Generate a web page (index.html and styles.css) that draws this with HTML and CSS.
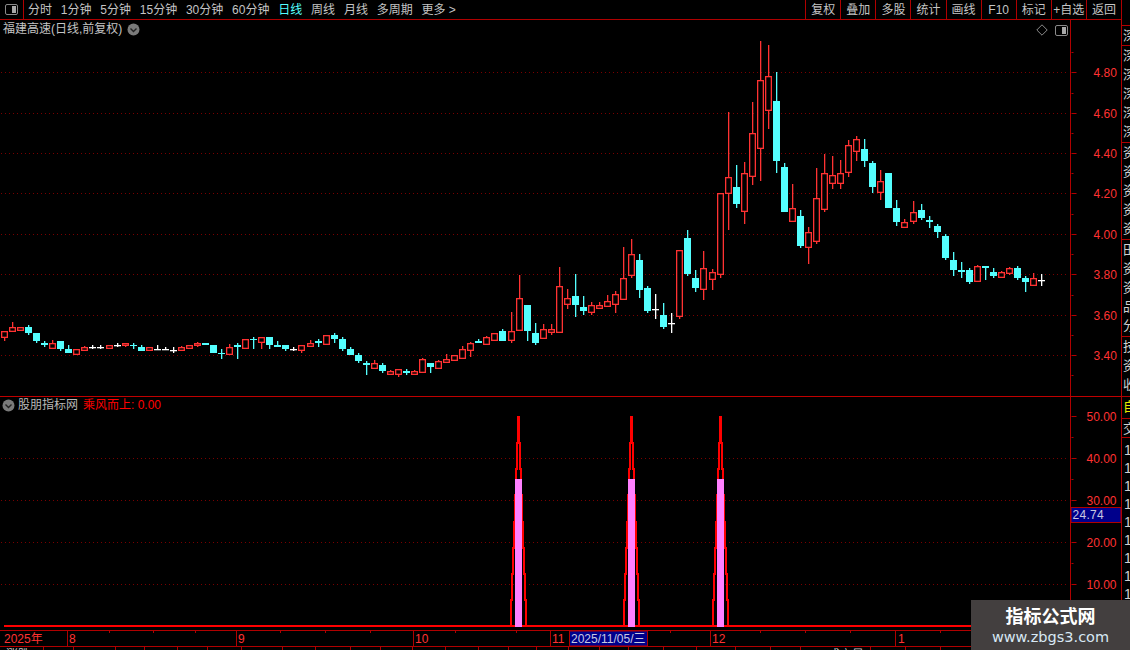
FILE: index.html
```html
<!DOCTYPE html>
<html lang="zh-CN">
<head>
<meta charset="utf-8">
<title>福建高速 日线</title>
<link rel="stylesheet" href="styles.css">
</head>
<body>
<div class="app">
  <div class="left">
    <header class="topbar">
      <div class="layout-btn">
        <svg class="box-icon" width="13" height="11" viewBox="0 0 13 11"><rect x="0.5" y="0.5" width="12" height="10" rx="1.5" class="box-line"/><rect x="7" y="2" width="4" height="7" class="box-fill"/></svg>
      </div>
      <nav class="periods">
        <span>分时</span><span>1分钟</span><span>5分钟</span><span>15分钟</span><span>30分钟</span><span>60分钟</span><span class="active">日线</span><span>周线</span><span>月线</span><span>多周期</span><span>更多 &gt;</span>
      </nav>
      <div class="tools">
        <span>复权</span><span>叠加</span><span>多股</span><span>统计</span><span>画线</span><span>F10</span><span>标记</span><span>+自选</span><span>返回</span>
      </div>
    </header>

    <section class="pane pane-main">
      <svg id="kline" class="plot" viewBox="0 20 1070 376" width="1070" height="376">
        <path class="grid" d="M1 72.5H1067M1 113.5H1067M1 153.5H1067M1 193.5H1067M1 234.5H1067M1 274.5H1067M1 315.5H1067M1 355.5H1067"/>
      </svg>
      <svg class="axis" viewBox="1071 20 50 376" width="50" height="376">
        <path class="tick" d="M1071 72.5h5M1071 113.5h5M1071 153.5h5M1071 193.5h5M1071 234.5h5M1071 274.5h5M1071 315.5h5M1071 355.5h5M1071 52.5h2M1071 93.5h2M1071 133.5h2M1071 173.5h2M1071 214.5h2M1071 254.5h2M1071 295.5h2M1071 335.5h2M1071 375.5h2"/>
        <text x="1093" y="77">4.80</text><text x="1093" y="118">4.60</text><text x="1093" y="158">4.40</text><text x="1093" y="198">4.20</text><text x="1093" y="239">4.00</text><text x="1093" y="279">3.80</text><text x="1093" y="320">3.60</text><text x="1093" y="360">3.40</text>
      </svg>
      <div class="pane-title title-main">
        <span>福建高速(日线,前复权)</span>
        <svg class="chev" width="13" height="13" viewBox="0 0 13 13"><circle cx="6.5" cy="6.5" r="6" class="chev-bg"/><path d="M3.5 5.5l3 3 3-3" class="chev-line"/></svg>
      </div>
      <div class="pane-icons">
        <svg width="12" height="12" viewBox="0 0 12 12"><path d="M6 .8L11.2 6 6 11.2.8 6z" class="box-line"/></svg>
        <svg width="13" height="11" viewBox="0 0 13 11"><rect x="0.5" y="0.5" width="12" height="10" rx="1.5" class="box-line"/><rect x="7" y="2" width="4" height="7" class="box-fill"/></svg>
      </div>
    </section>

    <section class="pane pane-sub">
      <svg class="plot" viewBox="0 397 1070 233" width="1070" height="233">
        <defs>
          <g id="peak">
            <path class="peak-line" d="M-7 627V600H-6V574H-5V548H-4V522H-3V495H-2V469H-1V443H0V417H1V443H2V469H3V495H4V522H5V548H6V574H7V600H8V627"/>
            <rect class="peak-fill" x="-3" y="479" width="7" height="148"/>
          </g>
        </defs>
        <path class="grid" d="M1 458.5H1067M1 500.5H1067M1 542.5H1067M1 584.5H1067"/>
        <path class="peak-line" d="M4 626H1070"/>
        <use href="#peak" x="518"/>
        <use href="#peak" x="631"/>
        <use href="#peak" x="720"/>
      </svg>
      <svg class="axis" viewBox="1071 397 50 233" width="50" height="233">
        <path class="tick" d="M1071 416.5h5M1071 458.5h5M1071 500.5h5M1071 542.5h5M1071 584.5h5M1071 437.5h2M1071 479.5h2M1071 563.5h2M1071 605.5h2"/>
        <text x="1086" y="421">50.00</text><text x="1086" y="463">40.00</text><text x="1086" y="505">30.00</text><text x="1086" y="547">20.00</text><text x="1086" y="589">10.00</text>
        <rect class="cursor-box" x="1070.5" y="507.5" width="50" height="15"/>
        <text class="cursor-text" x="1072" y="519">24.74</text>
      </svg>
      <div class="pane-title title-sub">
        <svg class="chev" width="13" height="13" viewBox="0 0 13 13"><circle cx="6.5" cy="6.5" r="6" class="chev-bg"/><path d="M3.5 5.5l3 3 3-3" class="chev-line"/></svg>
        <span class="sub-name">股朋指标网</span>
        <span class="sub-value">乘风而上: 0.00</span>
      </div>
    </section>

    <svg class="timeline" viewBox="0 631 1121 19" width="1121" height="19">
      <path class="tick" d="M67.5 631V646M236.5 631V646M413.5 631V646M550.5 631V646M710.5 631V646M895.5 631V646M109.5 631v2M153.5 631v2M195.5 631v2M280.5 631v2M325.5 631v2M370.5 631v2M455.5 631v2M516.5 631v2M670.5 631v2M760.5 631v2M805.5 631v2M850.5 631v2M940.5 631v2"/>
      <path class="tick" d="M0 646.5H1121M43.5 647v3M73.5 647v3M115.5 647v3M144.5 647v3M177.5 647v3M207.5 647v3M241.5 647v3M282.5 647v3M315.5 647v3M350.5 647v3M380.5 647v3M412.5 647v3M445.5 647v3M478.5 647v3M508.5 647v3M536.5 647v3M568.5 647v3M599.5 647v3M628.5 647v3M663.5 647v3M696.5 647v3M735.5 647v3M770.5 647v3M800.5 647v3M870.5 647v3M905.5 647v3M940.5 647v3"/>
      <rect class="date-box" x="569.5" y="631" width="78" height="15"/>
      <text class="date-text" x="571" y="643">2025/11/05/三</text>
      <text class="time-text" x="4" y="643">2025年</text>
      <text class="time-text" x="69" y="643">8</text>
      <text class="time-text" x="238" y="643">9</text>
      <text class="time-text" x="415" y="643">10</text>
      <text class="time-text" x="552" y="643">11</text>
      <text class="time-text" x="712" y="643">12</text>
      <text class="time-text" x="898" y="643">1</text>
      <text class="clip-text" x="6" y="659">涨跌</text>
      <text class="clip-text" x="828" y="659">成交量</text>
    </svg>
  </div>

  <aside class="strip">
    <div class="strip-sec h25"></div>
    <div class="strip-sec h19"><span>深</span></div>
    <div class="strip-sec h96"><span>深</span><span>深</span><span>深</span><span>深</span><span>深</span></div>
    <div class="strip-sec h96"><span>资</span><span>资</span><span>资</span><span>资</span><span>资</span></div>
    <div class="strip-sec h96"><span>田</span><span>资</span><span>资</span><span>品</span><span>分</span></div>
    <div class="strip-sec h60"><span>技</span><span>资</span><span>收</span></div>
    <div class="strip-sec h20 yellow"><span>自</span></div>
    <div class="strip-sec h18"><span>交</span></div>
    <div class="strip-nums"><span>1</span><span>1</span><span>1</span><span>1</span><span>1</span><span>1</span><span>1</span><span>1</span><span>1</span></div>
  </aside>

  <div class="watermark">
    <strong>指标公式网</strong>
    <em>www.zbgs3.com</em>
  </div>
</div>
<script src="chart.js"></script>
</body>
</html>
```
FILE: styles.css
```css
* { box-sizing: border-box; }
html, body { margin: 0; padding: 0; background: #000; }
body { font-family: "Liberation Sans", "Noto Sans CJK SC", sans-serif; font-size: 12px; color: #c4c4c4; }
svg { display: block; }

.app { position: relative; display: flex; width: 1130px; height: 650px; overflow: hidden; background: #000; }
.left { display: flex; flex-direction: column; width: 1121px; flex: none; }

.topbar { display: flex; align-items: stretch; height: 20px; border-bottom: 1px solid #b00000; flex: none; }
.layout-btn { display: flex; align-items: center; justify-content: center; width: 24px; border-right: 1px solid #b00000; padding-right: 1px; }
.periods { display: flex; align-items: center; gap: 8.8px; margin-left: 4px; padding-top: 2px; line-height: 19px; white-space: nowrap; }
.periods .active { color: #54ffff; }
.tools { display: flex; margin-left: auto; }
.tools span { display: flex; align-items: center; justify-content: center; width: 35.1px; border-left: 1px solid #b00000; padding-top: 2px; line-height: 19px; white-space: nowrap; }

.box-line { fill: none; stroke: #8a8a8a; stroke-width: 1; }
.box-fill { fill: #a8a8a8; }
.chev-bg { fill: #7a7a7a; }
.chev-line { fill: none; stroke: #222; stroke-width: 1.4; }

.pane { position: relative; display: flex; flex: none; border-bottom: 1px solid #c00000; }
.pane-main { height: 377px; }
.pane-sub { height: 234px; border-bottom-color: #b00000; }
.plot { flex: none; }
.axis { flex: none; width: 51px; border-left: 1px solid #b00000; box-sizing: content-box; }
.axis text { font-family: "Liberation Sans", sans-serif; font-size: 12px; fill: #ff3232; }
.grid { fill: none; stroke: #7a0000; stroke-width: 1; stroke-dasharray: 1 3; }
.tick { fill: none; stroke: #b00000; stroke-width: 1; }

.pane-title { position: absolute; display: flex; align-items: center; gap: 5px; line-height: 16px; white-space: nowrap; }
.title-main { left: 3px; top: 1px; }
.title-sub { left: 2px; top: 0; }
.sub-name { color: #b8b8b8; margin-left: -2px; }
.sub-value { color: #ff0000; }
.pane-icons { position: absolute; top: 4px; left: 1036px; display: flex; align-items: center; gap: 7px; }

.peak-line { fill: none; stroke: #ff0000; stroke-width: 2; }
.peak-fill { fill: #ff80ff; }
.axis .cursor-text { fill: #c8c8e0; letter-spacing: 0.3px; }
.cursor-box { fill: #00008b; stroke: #b00000; }

.timeline { flex: none; }
.date-box { fill: #00008b; stroke: #b00000; }
.date-text { font-size: 12px; fill: #c8c8e0; }
.time-text { font-size: 12px; fill: #ff3232; }
.clip-text { font-size: 12px; fill: #c4c4c4; }

.strip { display: flex; flex-direction: column; width: 9px; flex: none; border-left: 1px solid #b00000; overflow: hidden; }
.strip-sec { display: flex; flex-direction: column; flex: none; overflow: hidden; border-bottom: 1px solid #b00000; padding-left: 1px; font-size: 13px; line-height: 19px; color: #d0d0d0; }
.h25 { height: 26px; }
.h19 { height: 20px; }
.h96 { height: 97px; }
.h60 { height: 60px; }
.h20 { height: 22px; }
.h18 { height: 19px; }
.yellow { color: #e8e800; }
.strip-nums { display: flex; flex-direction: column; padding: 3px 0 0 2px; font-size: 14px; line-height: 18px; color: #d0d0d0; }

.watermark { position: absolute; right: 0; bottom: 0; display: flex; flex-direction: column; align-items: center; width: 159px; height: 50px; padding-top: 3px; background: #433f3f; }
.watermark strong { font-family: "Noto Sans CJK SC", sans-serif; font-size: 18px; line-height: 24px; color: #fff; font-weight: 700; }
.watermark em { font-family: "DejaVu Sans", sans-serif; font-style: normal; font-size: 14.5px; line-height: 20px; color: #d8e8f4; }
```
FILE: chart.js
```js
// [type, bodyTop, bodyBottom, wickTop, wickBottom]; r = hollow red, c = solid cyan, w = white doji
var data = [
["r",331,337,331,341],["r",327,331,322,331],["r",327,330,327,331],["c",327,333,325,335],["c",333,341,333,343],
["c",343,345,341,347],["r",343,348,340,348],["c",341,349,341,351],["c",349,353,345,353],["r",349,354,349,355],
["r",347,350,346,351],["w",347,347,345,349],["w",347,347,345,349],["r",345,348,345,349],["w",345,345,343,347],
["r",343,345,343,347],["c",345,346,343,349],["c",347,351,345,351],["r",347,350,347,351],["w",349,349,345,350],
["w",349,349,347,350],["w",350,350,347,353],["r",347,350,346,350],["r",345,348,345,349],["r",343,345,342,347],
["c",343,345,343,345],["c",345,353,345,353],["c",353,354,349,359],["r",347,354,344,355],["c",345,347,343,359],
["r",339,348,339,349],["c",339,340,337,349],["r",337,342,337,349],["c",337,345,337,349],["c",345,347,341,347],
["c",345,349,345,351],["w",349,349,347,351],["r",345,350,345,353],["r",343,346,340,347],["c",341,343,339,347],
["r",335,344,335,345],["c",335,339,333,343],["c",339,349,337,351],["c",349,355,347,355],["c",355,361,353,363],
["c",363,365,361,375],["r",363,368,360,369],["c",365,371,363,373],["r",371,374,370,375],["r",369,374,369,377],
["c",371,373,369,375],["r",371,374,370,375],["r",359,372,358,372],["c",363,367,363,373],["r",361,368,360,368],
["r",359,362,354,363],["r",355,360,355,361],["r",349,358,346,359],["r",343,350,342,357],["c",341,343,339,343],
["r",337,344,336,344],["r",333,340,333,340],["c",331,341,329,341],["r",331,340,312,343],["r",298,330,275,330],
["c",305,331,305,341],["c",333,343,323,345],["r",329,338,324,338],["r",329,332,324,335],["r",286,332,267,333],
["r",298,304,289,309],["c",296,305,274,317],["c",307,311,296,315],["r",305,312,302,315],["r",305,308,302,309],
["r",301,306,295,306],["r",294,304,291,313],["r",278,299,247,299],["r",254,275,239,278],["c",260,290,254,298],
["c",288,311,286,313],["w",309,309,294,319],["c",315,327,303,329],["w",323,323,313,333],["r",250,316,250,319],
["c",238,274,230,276],["c",278,288,270,292],["r",268,289,251,300],["r",272,279,269,290],["r",193,274,193,278],
["r",177,193,112,230],["c",187,204,165,208],["r",173,211,162,224],["r",133,176,102,185],["r",80,148,41,181],
["r",76,110,45,129],["c",101,161,72,173],["c",167,212,163,212],["r",208,221,184,222],["c",216,246,210,248],
["r",232,247,227,264],["r",198,241,168,244],["r",173,209,154,212],["r",175,183,156,189],["r",173,183,160,189],
["r",145,172,140,177],["r",139,151,136,161],["c",149,161,139,167],["c",163,187,161,193],["r",181,192,170,200],
["c",173,208,173,208],["c",208,222,200,226],["r",222,227,219,228],["r",212,221,201,224],["c",210,218,204,220],
["c",220,222,216,228],["c",226,232,224,238],["c",236,258,234,260],["c",260,270,252,276],["c",270,272,262,278],
["c",270,282,268,284],["r",266,281,265,282],["c",266,268,266,280],["c",272,276,268,278],["r",272,277,271,278],
["r",268,273,267,275],["c",268,278,266,280],["c",278,282,276,292],["r",278,285,273,285],["w",280,280,274,286]
];
var NS = "http://www.w3.org/2000/svg";
var COLOR = { r: "#ff3232", c: "#54ffff", w: "#ffffff" };
var svg = document.getElementById("kline");
var LINE = 1.3;
function rect(x, y, w, h, fill) {
  var e = document.createElementNS(NS, "rect");
  e.setAttribute("x", x); e.setAttribute("y", y);
  e.setAttribute("width", w); e.setAttribute("height", h);
  e.setAttribute("fill", fill);
  svg.appendChild(e);
}
data.forEach(function (d, i) {
  var cx = Math.round(4 + 8.04 * i), c = COLOR[d[0]], left = cx - 3;
  rect(cx, d[3], LINE, d[4] - d[3], c);
  if (d[0] === "r") {
    rect(left, d[1], 7, d[2] - d[1] + 1, c);
    rect(left + LINE, d[1] + LINE, 7 - 2 * LINE, d[2] - d[1] + 1 - 2 * LINE, "#000");
  } else if (d[0] === "c") {
    rect(left, d[1], 7, d[2] - d[1], c);
  } else {
    rect(left, d[1], 7, LINE, c);
  }
});
```
